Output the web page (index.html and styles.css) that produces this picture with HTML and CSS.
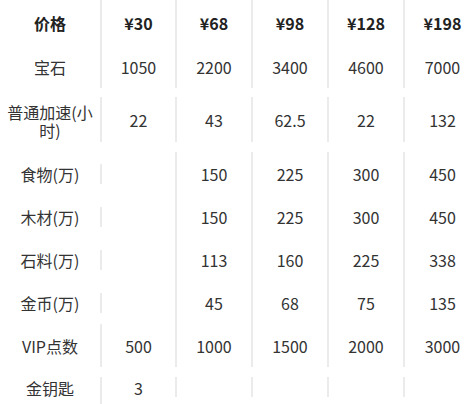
FILE: index.html
```html
<!DOCTYPE html>
<html lang="zh">
<head>
<meta charset="utf-8">
<link rel="stylesheet" href="styles.css">
</head>
<body>
<div class="table">
  <div class="block">
    <div class="row head">
      <div class="lbl">价格</div>
      <div class="c">¥30</div>
      <div class="c">¥68</div>
      <div class="c">¥98</div>
      <div class="c">¥128</div>
      <div class="c">¥198</div>
    </div>
    <div class="row r43">
      <div class="lbl">宝石</div>
      <div class="c">1050</div>
      <div class="c">2200</div>
      <div class="c">3400</div>
      <div class="c">4600</div>
      <div class="c">7000</div>
    </div>
  </div>
  <div class="block">
    <div class="row r45">
      <div class="lbl wrap">普通加速(小时)</div>
      <div class="c">22</div>
      <div class="c">43</div>
      <div class="c">62.5</div>
      <div class="c">22</div>
      <div class="c">132</div>
    </div>
  </div>
  <div class="block">
    <div class="row r43">
      <div class="lbl">食物(万)</div>
      <div class="c e"></div>
      <div class="c">150</div>
      <div class="c">225</div>
      <div class="c">300</div>
      <div class="c">450</div>
    </div>
    <div class="row r43">
      <div class="lbl">木材(万)</div>
      <div class="c e"></div>
      <div class="c">150</div>
      <div class="c">225</div>
      <div class="c">300</div>
      <div class="c">450</div>
    </div>
    <div class="row r43">
      <div class="lbl">石料(万)</div>
      <div class="c e"></div>
      <div class="c">113</div>
      <div class="c">160</div>
      <div class="c">225</div>
      <div class="c">338</div>
    </div>
    <div class="row r43">
      <div class="lbl">金币(万)</div>
      <div class="c e"></div>
      <div class="c">45</div>
      <div class="c">68</div>
      <div class="c">75</div>
      <div class="c">135</div>
    </div>
    <div class="row r43">
      <div class="lbl">VIP点数</div>
      <div class="c">500</div>
      <div class="c">1000</div>
      <div class="c">1500</div>
      <div class="c">2000</div>
      <div class="c">3000</div>
    </div>
  </div>
  <div class="block">
    <div class="row last">
      <div class="lbl">金钥匙</div>
      <div class="c">3</div>
      <div class="c e"></div>
      <div class="c e"></div>
      <div class="c e"></div>
      <div class="c e"></div>
    </div>
  </div>
</div>
</body>
</html>
```
FILE: styles.css
```css
html, body {
  margin: 0;
  padding: 0;
  background: #ffffff;
  overflow: hidden;
}
body {
  font-family: "Noto Sans CJK SC", "Noto Sans", sans-serif;
  font-size: 16px;
  color: #333333;
}
.table {
  width: 480px;
  display: flex;
  flex-direction: column;
  gap: 10px;
}
.block:nth-child(2) {
  margin-top: -1px;
}
.row {
  display: grid;
  grid-template-columns: 100px 75px 76px 76px 76px 77px;
  line-height: 22px;
}
.head { height: 45px; font-weight: 700; color: #222222; }
.r43 { height: 43px; }
.r45 { height: 45px; }
.last { height: 27px; }
.lbl, .c {
  display: flex;
  align-items: center;
  justify-content: center;
  text-align: center;
}
.c {
  border-left: 2px solid #ebebeb;
}
.wrap {
  line-height: 18px;
  padding-top: 2px;
}
.c.e {
  border-left: none;
  justify-content: flex-start;
}
.c.e::before {
  content: "";
  display: block;
  height: 20px;
  border-left: 2px solid #ebebeb;
}
.last .lbl, .last .c {
  align-items: flex-start;
}
```
